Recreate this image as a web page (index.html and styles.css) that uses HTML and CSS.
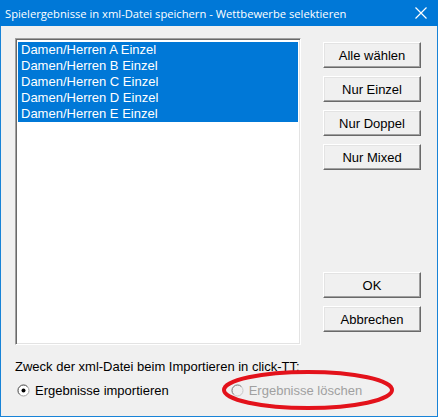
FILE: index.html
```html
<!DOCTYPE html>
<html lang="de">
<head>
<meta charset="utf-8">
<title>Spielergebnisse</title>
<link rel="stylesheet" href="styles.css">
</head>
<body>
<div class="window">
  <div class="titlebar">
    <span class="title">Spielergebnisse in xml-Datei speichern - Wettbewerbe selektieren</span>
    <svg class="close" width="12" height="12" viewBox="0 0 12 12"><path d="M0.5 0.5 L11.5 11.5 M11.5 0.5 L0.5 11.5" stroke="#fff" stroke-width="1.2" fill="none"/></svg>
  </div>
  <div class="client">
    <div class="main">
      <div class="listbox">
        <div class="item sel">Damen/Herren A Einzel</div>
        <div class="item sel">Damen/Herren B Einzel</div>
        <div class="item sel">Damen/Herren C Einzel</div>
        <div class="item sel">Damen/Herren D Einzel</div>
        <div class="item sel">Damen/Herren E Einzel</div>
      </div>
      <div class="buttons">
        <div class="btngroup">
          <button class="btn">Alle wählen</button>
          <button class="btn">Nur Einzel</button>
          <button class="btn">Nur Doppel</button>
          <button class="btn">Nur Mixed</button>
        </div>
        <div class="btngroup">
          <button class="btn">OK</button>
          <button class="btn">Abbrechen</button>
        </div>
      </div>
    </div>
    <div class="purpose">Zweck der xml-Datei beim Importieren in click-TT:</div>
    <div class="radios">
      <label class="radio">
        <svg width="13" height="13" viewBox="0 0 13 13"><circle cx="6.5" cy="6.5" r="5.5" fill="#fff" stroke="#a0a0a0"/><path d="M2.6 10.4 A5.5 5.5 0 0 1 10.4 2.6" stroke="#696969" fill="none"/><circle cx="6.5" cy="6.5" r="2" fill="#000"/></svg>
        <span>Ergebnisse importieren</span>
      </label>
      <label class="radio disabled">
        <svg width="13" height="13" viewBox="0 0 13 13"><circle cx="6.5" cy="6.5" r="5.5" fill="#f0f0f0" stroke="#c8c8c8"/><path d="M2.6 10.4 A5.5 5.5 0 0 1 10.4 2.6" stroke="#8a8a8a" fill="none"/></svg>
        <span>Ergebnisse löschen</span>
      </label>
      <svg class="ellipse" width="176" height="42" viewBox="0 0 176 42"><ellipse cx="86" cy="20" rx="84" ry="18" fill="none" stroke="#e3121b" stroke-width="4"/></svg>
    </div>
  </div>
</div>
</body>
</html>
```

FILE: styles.css
```css
* { box-sizing: border-box; }
html, body { margin: 0; padding: 0; background: #f0f0f0; }
.window {
  width: 438px;
  height: 417px;
  border: 1px solid #1883d7;
  border-top: none;
  background: #f0f0f0;
  display: flex;
  flex-direction: column;
  font-family: "Liberation Sans", Arial, sans-serif;
  font-size: 13px;
  color: #000;
}
.titlebar {
  height: 26px;
  margin: 0 -1px;
  background: #0078d7;
  color: #fff;
  display: flex;
  align-items: center;
  padding-left: 5px;
  padding-right: 10px;
  font-family: "Open Sans", "Noto Sans", sans-serif;
  font-size: 11.2px;
}
.title { flex: 1; white-space: nowrap; }
.close { display: block; margin-right: 1px; }
.client {
  flex: 1;
  padding: 12px 0 0 14px;
  display: flex;
  flex-direction: column;
}
.main { display: flex; }
.listbox {
  width: 286px;
  height: 307px;
  background: #fff;
  border-top: 1px solid #a0a0a0;
  border-left: 1px solid #a0a0a0;
  border-right: 1px solid #fff;
  border-bottom: 1px solid #fff;
  box-shadow: inset 1px 1px 0 #696969, inset -1px -1px 0 #e3e3e3;
  padding: 3px 2px;
}
.item {
  height: 16px;
  line-height: 16px;
  padding-left: 3px;
  white-space: nowrap;
}
.item.sel { background: #0078d7; color: #fff; }
.buttons {
  margin-left: 22px;
  display: flex;
  flex-direction: column;
  justify-content: space-between;
  padding-top: 4px;
  padding-bottom: 13px;
}
.btngroup { display: flex; flex-direction: column; gap: 8px; }
.btn {
  width: 98px;
  height: 26px;
  background: #f0f0f0;
  font: inherit;
  font-size: 13px;
  color: #000;
  border-top: 1px solid #fff;
  border-left: 1px solid #fff;
  border-right: 1px solid #696969;
  border-bottom: 1px solid #696969;
  box-shadow: inset -1px -1px 0 #a0a0a0, inset 1px 1px 0 #e3e3e3;
  padding: 0;
}
.purpose {
  margin-top: 14px;
  height: 15px;
  line-height: 15px;
}
.radios {
  position: relative;
  margin-top: 8px;
  display: flex;
  align-items: center;
  height: 16px;
  padding-left: 2px;
}
.radio { display: flex; align-items: center; gap: 5px; }
.radio svg { display: block; }
.radio.disabled { margin-left: 62px; color: #a0a0a0; }
.ellipse {
  position: absolute;
  left: 207px;
  top: -12px;
}
```
